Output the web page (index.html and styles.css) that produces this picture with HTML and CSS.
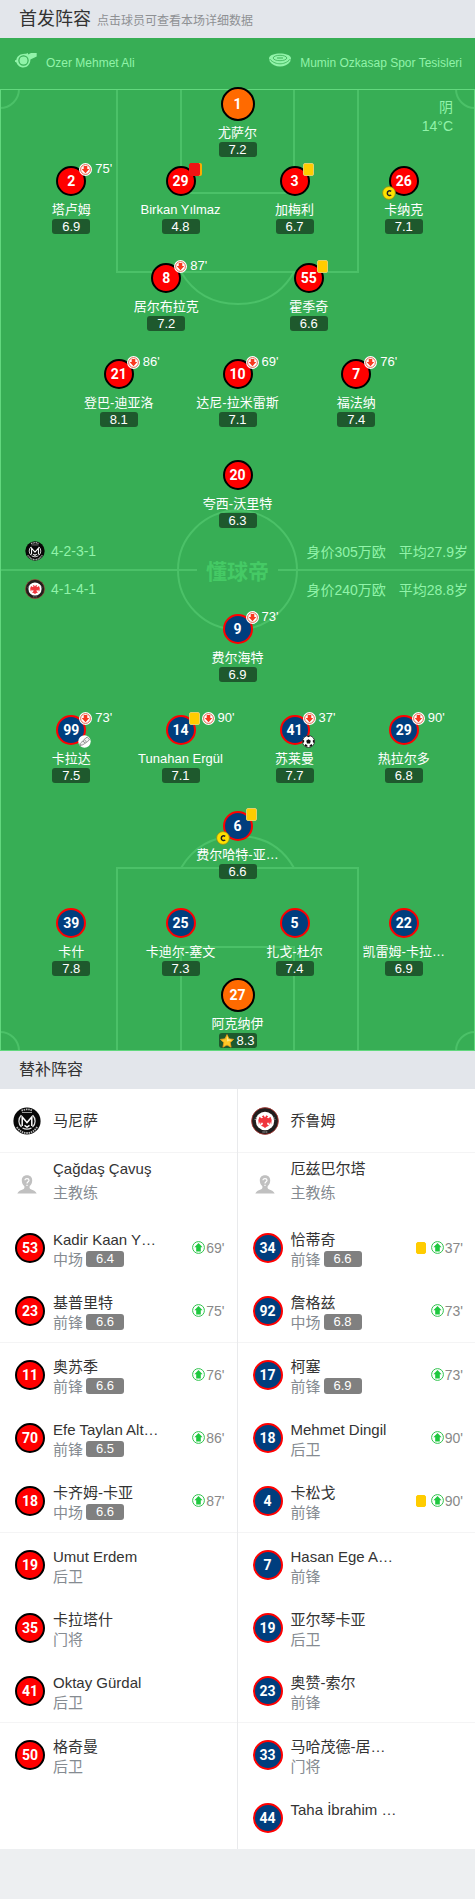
FILE: index.html
```html
<!DOCTYPE html>
<html lang="zh-CN">
<head>
<meta charset="utf-8">
<meta name="viewport" content="width=device-width, initial-scale=1">
<title>首发阵容</title>
<link rel="stylesheet" href="styles.css">
</head>
<body>
<svg class="defs" aria-hidden="true">
  <symbol id="out" viewBox="0 0 13 13"><circle cx="6.5" cy="6.5" r="6.5" fill="#fff"/><circle cx="6.5" cy="6.5" r="4.9" fill="none" stroke="#e0553c" stroke-width=".9"/><path d="M4.7 3h3.6v3h2L6.500 10.200 2.700 6h2z" fill="#f8391f"/></symbol>
  <symbol id="in" viewBox="0 0 13 13"><circle cx="6.5" cy="6.5" r="5.9" fill="#fff" stroke="#2fc24c" stroke-width="1"/><path d="M6.5 2 10.600 6.200H8.800v4.200H4.200V6.200H2.400z" fill="#1fc83f"/></symbol>
  <symbol id="cap" viewBox="0 0 14 14"><circle cx="7" cy="7" r="6.4" fill="#ffe100" stroke="#8a8a1c" stroke-width=".8"/><path d="M9.2 5.4C7.8 4.3 5.3 4.8 5.3 7.2s2.5 2.9 3.9 1.8" fill="none" stroke="#222" stroke-width="1.5"/></symbol>
  <symbol id="ball" viewBox="0 0 13 13"><circle cx="6.5" cy="6.5" r="6" fill="#fff" stroke="#222" stroke-width=".8"/><path d="M6.5 4.2 8.8 5.8 8 8.5H5L4.2 5.8zM4.6.9h3.8L6.5 2.3zM.7 4.8 2.3 5.4 2 7.5.6 7.8zM12.3 4.8 10.7 5.4 11 7.5l1.4.3zM2.6 10.8l.8-1.8 2 1.2-.2 1.9zM10.4 10.8 9.6 9l-2 1.2.2 1.9z" fill="#111"/></symbol>
  <symbol id="boot" viewBox="0 0 13 13"><circle cx="6.5" cy="6.5" r="6.2" fill="#fff"/><path d="M9.2 2 11.5 4.2C10.8 6.4 8.2 7.2 6.6 8.6 5.2 9.8 3.4 10.6 1.8 9.7 1.4 8.3 3.6 7.6 5 5.8 6.2 4 7.2 3.8 9.2 2zM5 6l2 2.2M6.4 4.6l1.8 2.2M2 9.7 3 11" fill="#eee" stroke="#777" stroke-width=".8"/></symbol>
  <symbol id="star" viewBox="0 0 14 14"><path d="M7 .6 9 4.8l4.6.6-3.4 3.2.9 4.6L7 11l-4.1 2.2.9-4.6L.4 5.4 5 4.8z" fill="#ffc928" stroke="#ee9a17" stroke-width=".8" stroke-linejoin="round"/><path d="M7 1.8 8.4 5.3l3.6.6-5 1.5z" fill="#ffe680"/></symbol>
  <symbol id="home" viewBox="0 0 28 28"><circle cx="14" cy="14" r="13.6" fill="#080808"/><path d="M8.5 3.6Q14 1.2 19.500 3.600M3.800 20Q8 26 14 26T24.200 20" fill="none" stroke="#bbb" stroke-width="1.800" stroke-dasharray="1.500 .8"/><path d="M9 5.500h10" stroke="#999"/><path d="M8.300 8.200A8.200 8.200 0 0 0 8.500 20M19.700 8.200A8.200 8.200 0 0 1 19.500 20M9.500 21Q14 23.400 18.500 21" fill="none" stroke="#ddd" stroke-width="1.300"/><path d="M9.200 19V10L14 15.500 18.800 10V19M11.500 18.300 14 20l2.500-1.700" fill="none" stroke="#fff" stroke-width="1.500"/></symbol>
  <symbol id="away" viewBox="0 0 28 28"><circle cx="14" cy="14" r="13.400" fill="#211d1d" stroke="#b33a35" stroke-width=".8"/><path d="M4.200 13A10.500 10.500 0 0 1 23.800 13" fill="none" stroke="#999" stroke-width="1.700" stroke-dasharray="1.300 .9"/><path d="M11.500 25h5" stroke="#888" stroke-width="1.300" stroke-dasharray="1.200 .6"/><circle cx="14" cy="14" r="9.200" fill="#fff"/><path d="M14 10.500 12.500 8.300 10.800 9.500 12.200 10.800 10.500 11.200 8.500 9.800 7.300 13 7.800 17.500 9 14.800 9.500 17.800 10.700 15.500 12 16 11.300 18 9.700 18.800 12 19.600 14 21 16 19.600 18.300 18.800 16.700 18 16 16 17.300 15.500 18.500 17.800 19 14.800 20.200 17.500 20.700 13 19.500 9.800 17.500 11.200 15.800 10.800 17.200 9.500 15.500 8.300z" fill="#f0353d"/></symbol>
  <symbol id="coach" viewBox="0 0 20 19"><path d="M10 .3c3.500 0 5.200 2.200 5.200 5.200 0 2.500-1 4.300-2.400 5.500-.6 1.300-.3 2.600 1 3.200 2.200 1 5 1.700 5.900 4.300H.3c.9-2.600 3.700-3.300 5.900-4.300 1.300-.6 1.600-1.900 1-3.200C5.800 9.800 4.800 8 4.800 5.500 4.800 2.500 6.500.3 10 .3z" fill="#c0c0c0"/><path d="M8 5.200C8 3.200 12 3.200 12 5.300 12 6.800 10 6.800 10 8.500M10 9.800v1.300" fill="none" stroke="#fff" stroke-width="1.200"/></symbol>
</svg>

<header class="bar"><h1 class="bar-title">首发阵容</h1><span class="hint">点击球员可查看本场详细数据</span></header>

<main>
<section class="pitch">
  <div class="info">
    <span class="info-item"><svg class="info-icon" viewBox="0 0 22 15"><path d="M8 1a7 7 0 0 1 3-.2L13 0v1.500L16 0h5.700v3.500L15.400 6.500c0 4.500-3 8-7.200 8C5 14.500 2.300 12.300 1.500 9.500L0 8.800V7.200L1.300 7C1.600 4 4.500 1.200 8 1z" fill="#91f3a9"/><circle cx="8.500" cy="7.500" r="4.600" fill="none" stroke="#37ae55" stroke-width="1.200"/></svg>Ozer Mehmet Ali</span>
    <span class="info-item"><svg class="info-icon" viewBox="0 0 22 15"><path d="M0 5.500C0 2 6 .6 11 .6S22 2 22 5.500l-.8 3C19 11.800 15 13.600 11 13.600S3 11.800.8 8.500z" fill="#91f3a9"/><path d="M.6 6C4 9.800 8 10.800 11 10.800S18 9.800 21.400 6" fill="none" stroke="#37ae55" stroke-width=".8"/><ellipse cx="11" cy="5" rx="6.800" ry="2.700" fill="none" stroke="#37ae55" stroke-width=".8"/><path d="M8 4.500h6v1H8z" fill="#37ae55"/></svg>Mumin Ozkasap Spor Tesisleri</span>
  </div>
  <div class="field">
    <svg class="lines" viewBox="0 0 475 962" preserveAspectRatio="none" aria-hidden="true">
      <g fill="none" stroke="#4bc168" stroke-width="2">
        <path d="M117 0V183H358V0M181 0V104H294V0M181 183Q200 215 238 215T294 183"/>
        <path d="M117 962V779H358V962M181 962V858H294V962M181 779Q200 747 238 747T294 779"/>
        <circle cx="237.500" cy="481" r="59.500"/>
        <path d="M0 481H197M278 481H475"/>
        <path d="M19 0A19 19 0 0 1 0 19M456 0A19 19 0 0 0 475 19M19 962A19 19 0 0 0 0 943M456 962A19 19 0 0 1 475 943"/>
      </g>
      <rect x=".5" y=".5" width="474" height="961" fill="none" stroke="#62d87e"/>
    </svg>
    <div class="weather"><span>阴</span><span>14°C</span></div>

    <div class="line keeper home"><a class="player" href="#"><span class="shirt">1</span><span class="name">尤萨尔</span><span class="rate">7.2</span></a></div>
    <div class="line four home">
      <a class="player" href="#"><span class="shirt">2<span class="events"><svg class="ev"><use href="#out"/></svg><span class="min">75'</span></span></span><span class="name">塔卢姆</span><span class="rate">6.9</span></a>
      <a class="player" href="#"><span class="shirt">29<span class="events"><i class="card red"></i></span></span><span class="name">Birkan Yılmaz</span><span class="rate">4.8</span></a>
      <a class="player" href="#"><span class="shirt">3<span class="events"><i class="card"></i></span></span><span class="name">加梅利</span><span class="rate">6.7</span></a>
      <a class="player" href="#"><span class="shirt">26<svg class="captain"><use href="#cap"/></svg></span><span class="name">卡纳克</span><span class="rate">7.1</span></a>
    </div>
    <div class="line two home">
      <a class="player" href="#"><span class="shirt">8<span class="events"><svg class="ev"><use href="#out"/></svg><span class="min">87'</span></span></span><span class="name">居尔布拉克</span><span class="rate">7.2</span></a>
      <a class="player" href="#"><span class="shirt">55<span class="events"><i class="card"></i></span></span><span class="name">霍季奇</span><span class="rate">6.6</span></a>
    </div>
    <div class="line three home">
      <a class="player" href="#"><span class="shirt">21<span class="events"><svg class="ev"><use href="#out"/></svg><span class="min">86'</span></span></span><span class="name">登巴-迪亚洛</span><span class="rate">8.1</span></a>
      <a class="player" href="#"><span class="shirt">10<span class="events"><svg class="ev"><use href="#out"/></svg><span class="min">69'</span></span></span><span class="name">达尼-拉米雷斯</span><span class="rate">7.1</span></a>
      <a class="player" href="#"><span class="shirt">7<span class="events"><svg class="ev"><use href="#out"/></svg><span class="min">76'</span></span></span><span class="name">福法纳</span><span class="rate">7.4</span></a>
    </div>
    <div class="line striker home"><a class="player" href="#"><span class="shirt">20</span><span class="name">夸西-沃里特</span><span class="rate">6.3</span></a></div>

    <div class="middle">
      <div class="tactic"><svg class="crest"><use href="#home"/></svg><span>4-2-3-1</span><span class="value">身价305万欧</span><span>平均27.9岁</span></div>
      <div class="brand">懂球帝</div>
      <div class="tactic"><svg class="crest"><use href="#away"/></svg><span>4-1-4-1</span><span class="value">身价240万欧</span><span>平均28.8岁</span></div>
    </div>

    <div class="line striker away"><a class="player" href="#"><span class="shirt">9<span class="events"><svg class="ev"><use href="#out"/></svg><span class="min">73'</span></span></span><span class="name">费尔海特</span><span class="rate">6.9</span></a></div>
    <div class="line four away">
      <a class="player" href="#"><span class="shirt">99<span class="events"><svg class="ev"><use href="#out"/></svg><span class="min">73'</span></span><svg class="feat"><use href="#boot"/></svg></span><span class="name">卡拉达</span><span class="rate">7.5</span></a>
      <a class="player" href="#"><span class="shirt">14<span class="events"><i class="card"></i><svg class="ev"><use href="#out"/></svg><span class="min">90'</span></span></span><span class="name">Tunahan Ergül</span><span class="rate">7.1</span></a>
      <a class="player" href="#"><span class="shirt">41<span class="events"><svg class="ev"><use href="#out"/></svg><span class="min">37'</span></span><svg class="feat"><use href="#ball"/></svg></span><span class="name">苏莱曼</span><span class="rate">7.7</span></a>
      <a class="player" href="#"><span class="shirt">29<span class="events"><svg class="ev"><use href="#out"/></svg><span class="min">90'</span></span></span><span class="name">热拉尔多</span><span class="rate">6.8</span></a>
    </div>
    <div class="line holding away"><a class="player" href="#"><span class="shirt">6<span class="events"><i class="card"></i></span><svg class="captain"><use href="#cap"/></svg></span><span class="name">费尔哈特-亚…</span><span class="rate">6.6</span></a></div>
    <div class="line four back away">
      <a class="player" href="#"><span class="shirt">39</span><span class="name">卡什</span><span class="rate">7.8</span></a>
      <a class="player" href="#"><span class="shirt">25</span><span class="name">卡迪尔-塞文</span><span class="rate">7.3</span></a>
      <a class="player" href="#"><span class="shirt">5</span><span class="name">扎戈-杜尔</span><span class="rate">7.4</span></a>
      <a class="player" href="#"><span class="shirt">22</span><span class="name">凯雷姆-卡拉…</span><span class="rate">6.9</span></a>
    </div>
    <div class="line keeper away"><a class="player" href="#"><span class="shirt">27</span><span class="name">阿克纳伊</span><span class="rate"><svg class="star"><use href="#star"/></svg>8.3</span></a></div>
  </div>
</section>

<section>
  <header class="bar"><h2 class="bar-title small">替补阵容</h2></header>
  <div class="bench">
    <ul class="squad home">
      <li class="sub team"><svg class="logo"><use href="#home"/></svg><div class="who"><span class="sub-name">马尼萨</span></div></li>
      <li class="sub coach"><svg class="avatar"><use href="#coach"/></svg><div class="who"><span class="sub-name">Çağdaş Çavuş</span><span class="role">主教练</span></div></li>
      <li class="sub"><span class="shirt">53</span><div class="who"><span class="sub-name">Kadir Kaan Y…</span><span class="role">中场<span class="rate">6.4</span></span></div><span class="when"><svg class="ev"><use href="#in"/></svg>69'</span></li>
      <li class="sub"><span class="shirt">23</span><div class="who"><span class="sub-name">基普里特</span><span class="role">前锋<span class="rate">6.6</span></span></div><span class="when"><svg class="ev"><use href="#in"/></svg>75'</span></li>
      <li class="sub"><span class="shirt">11</span><div class="who"><span class="sub-name">奥苏季</span><span class="role">前锋<span class="rate">6.6</span></span></div><span class="when"><svg class="ev"><use href="#in"/></svg>76'</span></li>
      <li class="sub"><span class="shirt">70</span><div class="who"><span class="sub-name">Efe Taylan Alt…</span><span class="role">前锋<span class="rate">6.5</span></span></div><span class="when"><svg class="ev"><use href="#in"/></svg>86'</span></li>
      <li class="sub"><span class="shirt">18</span><div class="who"><span class="sub-name">卡齐姆-卡亚</span><span class="role">中场<span class="rate">6.6</span></span></div><span class="when"><svg class="ev"><use href="#in"/></svg>87'</span></li>
      <li class="sub"><span class="shirt">19</span><div class="who"><span class="sub-name">Umut Erdem</span><span class="role">后卫</span></div></li>
      <li class="sub"><span class="shirt">35</span><div class="who"><span class="sub-name">卡拉塔什</span><span class="role">门将</span></div></li>
      <li class="sub"><span class="shirt">41</span><div class="who"><span class="sub-name">Oktay Gürdal</span><span class="role">后卫</span></div></li>
      <li class="sub"><span class="shirt">50</span><div class="who"><span class="sub-name">格奇曼</span><span class="role">后卫</span></div></li>
    </ul>
    <ul class="squad away">
      <li class="sub team"><svg class="logo"><use href="#away"/></svg><div class="who"><span class="sub-name">乔鲁姆</span></div></li>
      <li class="sub coach"><svg class="avatar"><use href="#coach"/></svg><div class="who"><span class="sub-name">厄兹巴尔塔</span><span class="role">主教练</span></div></li>
      <li class="sub"><span class="shirt">34</span><div class="who"><span class="sub-name">恰蒂奇</span><span class="role">前锋<span class="rate">6.6</span></span></div><span class="when"><i class="card"></i><svg class="ev"><use href="#in"/></svg>37'</span></li>
      <li class="sub"><span class="shirt">92</span><div class="who"><span class="sub-name">詹格兹</span><span class="role">中场<span class="rate">6.8</span></span></div><span class="when"><svg class="ev"><use href="#in"/></svg>73'</span></li>
      <li class="sub"><span class="shirt">17</span><div class="who"><span class="sub-name">柯塞</span><span class="role">前锋<span class="rate">6.9</span></span></div><span class="when"><svg class="ev"><use href="#in"/></svg>73'</span></li>
      <li class="sub"><span class="shirt">18</span><div class="who"><span class="sub-name">Mehmet Dingil</span><span class="role">后卫</span></div><span class="when"><svg class="ev"><use href="#in"/></svg>90'</span></li>
      <li class="sub"><span class="shirt">4</span><div class="who"><span class="sub-name">卡松戈</span><span class="role">前锋</span></div><span class="when"><i class="card"></i><svg class="ev"><use href="#in"/></svg>90'</span></li>
      <li class="sub"><span class="shirt">7</span><div class="who"><span class="sub-name">Hasan Ege A…</span><span class="role">前锋</span></div></li>
      <li class="sub"><span class="shirt">19</span><div class="who"><span class="sub-name">亚尔琴卡亚</span><span class="role">后卫</span></div></li>
      <li class="sub"><span class="shirt">23</span><div class="who"><span class="sub-name">奥赞-索尔</span><span class="role">前锋</span></div></li>
      <li class="sub"><span class="shirt">33</span><div class="who"><span class="sub-name">马哈茂德-居…</span><span class="role">门将</span></div></li>
      <li class="sub"><span class="shirt">44</span><div class="who"><span class="sub-name">Taha İbrahim …</span><span class="role"></span></div></li>
    </ul>
  </div>
</section>
</main>
</body>
</html>
```
FILE: styles.css
```css
* { box-sizing: border-box; }
body {
  margin: 0;
  background: #edeff1;
  color: #333;
  font-family: "Liberation Sans", "Noto Sans CJK SC", sans-serif;
}
.defs { display: none; }
svg { display: block; flex: none; }

.bar {
  display: flex;
  align-items: center;
  gap: 6px;
  height: 38px;
  padding: 0 19px;
  background: #e3e6eb;
}
.bar-title { margin: 0; font-size: 18px; font-weight: 400; line-height: 24px; }
.bar-title.small { font-size: 16px; }
.hint { color: #8e9093; font-size: 12px; }

.pitch { background: #37ae55; color: #91f3a9; }
.info {
  display: flex;
  justify-content: space-between;
  height: 49px;
  padding: 15px 13px 0 15px;
  font-size: 12px;
  line-height: 20px;
}
.info-item { display: flex; gap: 9px; }
.info-icon { width: 22px; height: 15px; }

.field { position: relative; }
.lines { position: absolute; top: 2px; left: 0; width: 100%; height: calc(100% - 2px); }
.weather {
  position: absolute;
  top: 11px;
  right: 22px;
  display: flex;
  flex-direction: column;
  align-items: flex-end;
  font-size: 14px;
  line-height: 19px;
}

.line { position: relative; display: flex; justify-content: center; padding-bottom: 29px; }
.player {
  display: flex;
  flex-direction: column;
  align-items: center;
  width: 25%;
  color: #fff;
  text-decoration: none;
}
.four .player { width: 23%; }
.four .player:nth-child(2) { margin-right: 1%; }
.two .player { width: 30%; }
.two, .away.four { padding-bottom: 28px; }
.three.home, .striker.away { padding-bottom: 33px; }
.away.back { padding-bottom: 2px; }
.striker.home { padding-bottom: 0; }
.keeper.home { padding-bottom: 9px; }
.keeper.away { padding-bottom: 3px; }

.shirt {
  position: relative;
  flex: none;
  width: 30px;
  height: 30px;
  border: 2px solid #000;
  border-radius: 50%;
  background: #f00;
  color: #fff;
  font: 700 14px/26px Roboto, sans-serif;
  text-align: center;
}
.away .shirt { border-color: #f00; background: #003e7e; }
.keeper .shirt { width: 34px; height: 34px; border-color: #000; background: #ff6a00; line-height: 30px; }
.name { margin-top: 4px; font-size: 13px; line-height: 19px; white-space: nowrap; }
.keeper .name { margin-top: 2px; }
.rate {
  display: flex;
  align-items: center;
  justify-content: center;
  gap: 2px;
  width: 38px;
  height: 15px;
  border-radius: 3px;
  background: #1e592d;
  color: #fff;
  font-size: 13px;
  line-height: 15px;
}
.star { width: 14px; height: 14px; }

.events {
  position: absolute;
  top: -5px;
  left: 21px;
  display: flex;
  gap: 2px;
  font: 400 13px/13px "Liberation Sans", sans-serif;
}
.ev { width: 13px; height: 13px; }
.min { padding-left: 1px; line-height: 12px; }
.card { flex: none; width: 11px; height: 13px; border: 1px solid #e5cf6a; border-radius: 2px; background: #fc0; }
.card.red { border-color: #f01414; background: #f01414; box-shadow: 2px 0 #fa0; }
.captain { position: absolute; top: 18px; left: -9px; width: 14px; height: 14px; }
.feat { position: absolute; top: 18px; left: 20px; width: 13px; height: 13px; }

.middle { position: relative; padding: 13px 7px 15px 25px; font-size: 14px; }
.tactic { display: flex; align-items: center; gap: 6px; height: 20px; }
.crest { width: 20px; height: 20px; }
.value { margin-left: auto; padding-right: 7px; }
.brand {
  margin-right: 18px;
  color: #45ca65;
  font-family: "Noto Sans CJK SC", sans-serif;
  font-size: 21px;
  font-weight: 700;
  line-height: 18px;
  text-align: center;
}

.bench { display: grid; grid-template-columns: 1fr 1fr; background: #fff; }
.squad { margin: 0; padding: 0; list-style: none; }
.squad.home { border-right: 1px solid #e9eaec; }
.sub {
  display: flex;
  align-items: center;
  gap: 8px;
  height: 63px;
  padding: 0 12px 0 15px;
}
.sub:nth-child(3n+1) { height: 64px; border-bottom: 1px solid #f4f4f5; }
.logo { width: 28px; height: 28px; margin: 0 4px 0 -2px; }
.avatar { width: 20px; height: 19px; margin: 0 8px 0 2px; }
.who { display: flex; flex: 1; flex-direction: column; gap: 1px; min-width: 0; padding-top: 3px; }
.sub-name { color: #333; font-size: 15px; line-height: 19px; white-space: nowrap; }
.role { display: flex; align-items: center; gap: 3px; height: 19px; color: #858b91; font-size: 15px; line-height: 19px; }
.role .rate { height: 16px; background: #808080; line-height: 16px; }
.team .who { padding-top: 0; }
.coach .who { gap: 5px; padding: 0 0 8px; }
.when { display: flex; align-items: center; gap: 1px; color: #888; font-size: 14px; line-height: 18px; }
.when .card { width: 10px; height: 12px; margin-right: 4px; border-color: #fc0; }
```
